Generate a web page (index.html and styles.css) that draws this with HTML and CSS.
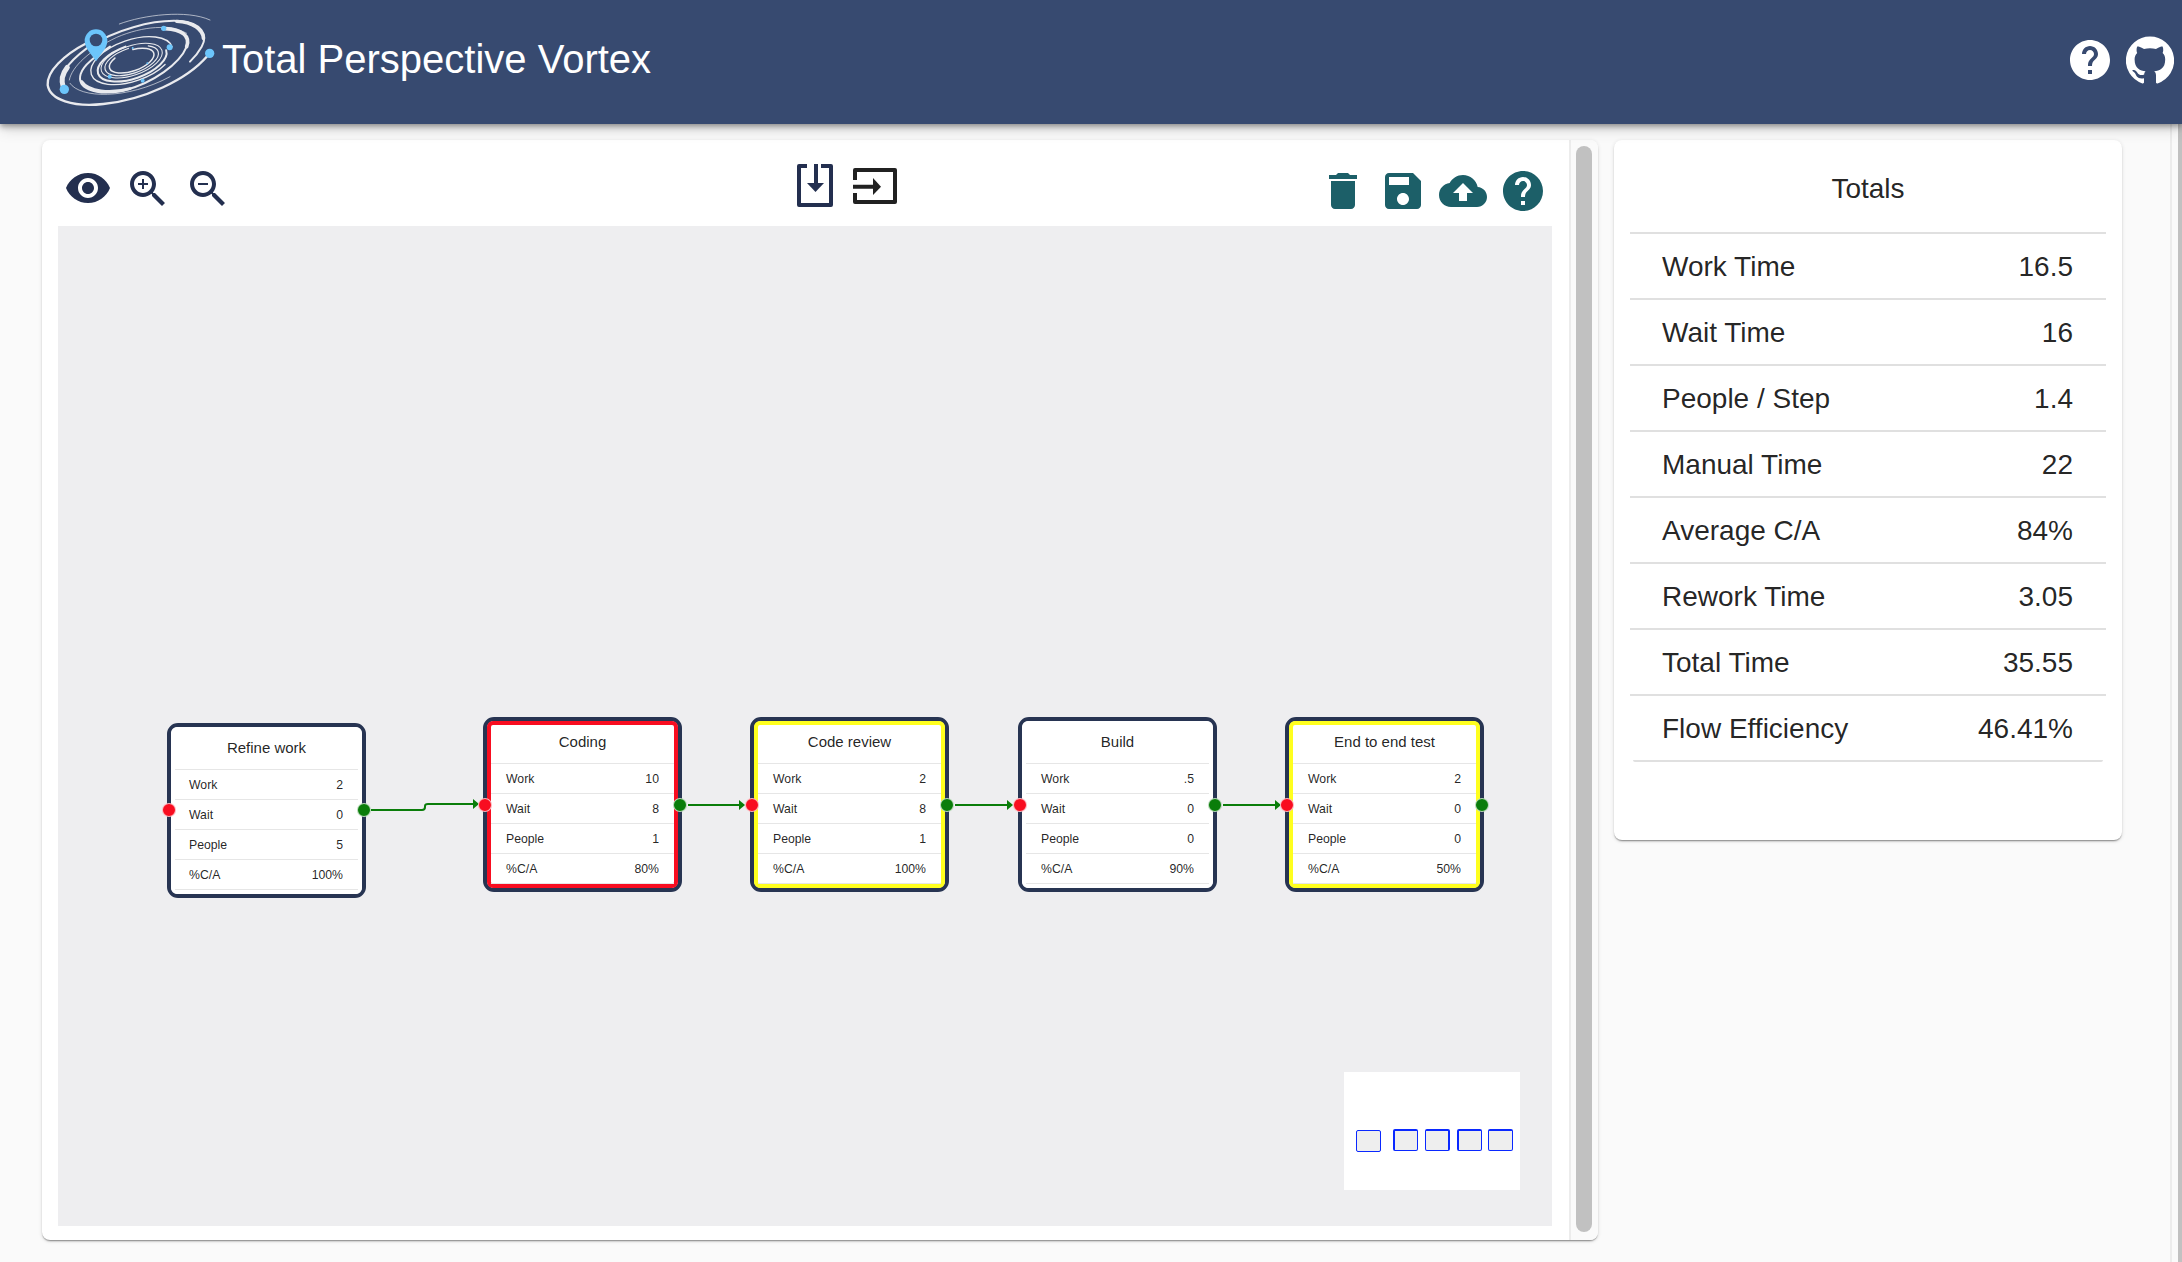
FILE: index.html
```html
<!DOCTYPE html>
<html lang="en">
<head>
<meta charset="utf-8">
<title>Total Perspective Vortex</title>
<link rel="stylesheet" href="styles.css">
</head>
<body>
<header class="app-bar">
  <svg class="logo" viewBox="0 0 576 372" aria-hidden="true">
    <g fill="none" stroke="#e9eaee" stroke-linecap="round">
      <path class="thin" d="M268 72C340 45 470 28 540 60"/>
      <path stroke-width="7" d="M532 168C470 240 340 300 220 312C130 322 60 300 53 255C50 215 100 165 172 128"/>
      <path stroke-width="6" d="M98 262C84 230 110 190 170 145C250 90 370 58 450 63C515 68 535 105 515 140C505 158 495 170 480 185"/>
      <path stroke-width="15" d="M100 262C92 240 96 222 112 202"/>
      <path stroke-width="10" d="M440 64C490 66 518 90 520 115"/>
      <path stroke-width="11" d="M406 86C455 88 482 108 470 140"/>
      <path stroke-width="6" d="M470 140C450 190 370 250 280 272C190 290 140 262 152 222C160 195 195 170 240 140"/>
      <path stroke-width="9" d="M155 245C175 275 240 282 300 266"/>
      <path class="thin" d="M118 240C125 200 180 150 260 112C340 78 420 72 470 100"/>
      <path class="thin" d="M120 250C150 295 290 300 420 230"/>
      <g transform="rotate(-19 305 182)">
        <ellipse stroke-width="4" cx="305" cy="182" rx="128" ry="62" stroke-dasharray="620 180" stroke-dashoffset="-60"/>
        <ellipse stroke-width="6" cx="305" cy="186" rx="108" ry="50" stroke-dasharray="380 150"/>
        <ellipse stroke-width="3" cx="305" cy="182" rx="96" ry="44"/>
        <ellipse stroke-width="3.5" cx="305" cy="182" rx="84" ry="38" stroke-dasharray="300 60"/>
        <ellipse stroke-width="4.5" cx="305" cy="182" rx="70" ry="31" stroke-dasharray="200 60"/>
      </g>
    </g>
    <g fill="#6cc5fb">
      <circle cx="103" cy="268" r="14"/>
      <circle cx="539" cy="160" r="14"/>
      <circle cx="401" cy="85" r="8"/>
      <circle cx="419" cy="142" r="9"/>
      <circle cx="239" cy="230" r="6"/>
      <circle cx="338" cy="242" r="6"/>
      <circle cx="308" cy="144" r="3"/>
      <circle cx="352" cy="190" r="3"/>
      <path d="M198 184C188 166 164 146 164 122a34 34 0 0 1 68 0C232 146 208 166 198 184z"/>
    </g>
    <circle cx="198" cy="120" r="19" fill="#374a70"/>
  </svg>
  <h1 class="app-title">Total Perspective Vortex</h1>
  <div class="app-actions">
    <svg class="icon-48 white" viewBox="0 0 24 24"><path d="M12 2C6.48 2 2 6.48 2 12s4.48 10 10 10 10-4.48 10-10S17.52 2 12 2zm1 17h-2v-2h2v2zm2.07-7.75l-.9.92C13.45 12.9 13 13.5 13 15h-2v-.5c0-1.1.45-2.1 1.17-2.83l1.24-1.26c.37-.36.59-.86.59-1.41 0-1.1-.9-2-2-2s-2 .9-2 2H8c0-2.21 1.79-4 4-4s4 1.79 4 4c0 .88-.36 1.68-.93 2.25z"/></svg>
    <svg class="icon-48 white" viewBox="0 0 24 24"><path d="M12 .3a12 12 0 0 0-3.8 23.4c.6.1.8-.3.8-.6v-2c-3.3.7-4-1.6-4-1.6-.6-1.4-1.4-1.8-1.4-1.8-1-.7.1-.7.1-.7 1.2 0 1.9 1.2 1.9 1.2 1 1.8 2.8 1.3 3.5 1 0-.8.4-1.3.7-1.6-2.7-.3-5.5-1.3-5.5-6 0-1.2.5-2.3 1.3-3.1-.2-.4-.6-1.6 0-3.2 0 0 1-.3 3.4 1.2a11.5 11.5 0 0 1 6 0c2.3-1.5 3.3-1.2 3.3-1.2.6 1.6.2 2.8 0 3.2.9.8 1.3 1.9 1.3 3.2 0 4.6-2.8 5.6-5.5 5.9.5.4.9 1 .9 2.2v3.3c0 .3.1.7.8.6A12 12 0 0 0 12 .3"/></svg>
  </div>
</header>

<main class="page">
  <section class="card editor">
    <div class="editor-body">
      <div class="toolbar">
        <div class="tool-group tool-left">
          <svg class="icon-48 navy eye" viewBox="0 0 24 24"><path d="M12 4.5C7 4.5 2.73 7.61 1 12c1.73 4.39 6 7.5 11 7.5s9.27-3.11 11-7.5c-1.73-4.39-6-7.5-11-7.5zM12 17c-2.76 0-5-2.24-5-5s2.24-5 5-5 5 2.24 5 5-2.24 5-5 5zm0-8c-1.66 0-3 1.34-3 3s1.34 3 3 3 3-1.34 3-3-1.34-3-3-3z"/></svg>
          <svg class="icon-48 navy" viewBox="0 0 24 24"><path d="M15.5 14h-.79l-.28-.27C15.41 12.59 16 11.11 16 9.5 16 5.91 13.09 3 9.5 3S3 5.91 3 9.5 5.91 16 9.5 16c1.61 0 3.09-.59 4.23-1.57l.27.28v.79l5 4.99L20.49 19l-4.99-5zm-6 0C7.01 14 5 11.99 5 9.5S7.01 5 9.5 5 14 7.01 14 9.5 11.99 14 9.5 14z"/><path d="M12 10h-2v2H9v-2H7V9h2V7h1v2h2v1z"/></svg>
          <svg class="icon-48 navy" viewBox="0 0 24 24"><path d="M15.5 14h-.79l-.28-.27C15.41 12.59 16 11.11 16 9.5 16 5.91 13.09 3 9.5 3S3 5.91 3 9.5 5.91 16 9.5 16c1.61 0 3.09-.59 4.23-1.57l.27.28v.79l5 4.99L20.49 19l-4.99-5zm-6 0C7.01 14 5 11.99 5 9.5S7.01 5 9.5 5 14 7.01 14 9.5 11.99 14 9.5 14zM7 9h5v1H7z"/></svg>
        </div>
        <div class="tool-group tool-center">
          <svg class="icon-import" viewBox="0 0 40 48"><path class="outline" d="M12 4H4v39h32V4h-10"/><path class="outline" d="M21 2v22"/><path class="solid" d="M12 21h17l-8.500 9z"/></svg>
          <svg class="icon-enter" viewBox="0 0 48 40"><path class="outline" d="M4 14V4h40v32H4V27"/><path class="outline" d="M2 20.700h21"/><path class="solid" d="M22 12l8 8.700-8 8.300z"/></svg>
        </div>
        <div class="tool-group tool-right">
          <svg class="icon-48 teal" viewBox="0 0 24 24"><path d="M6 19c0 1.100.9 2 2 2h8c1.100 0 2-.9 2-2V7H6v12zM19 4h-3.500l-1-1h-5l-1 1H5v2h14V4z"/></svg>
          <svg class="icon-48 teal" viewBox="0 0 24 24"><path d="M17 3H5c-1.110 0-2 .9-2 2v14c0 1.100.89 2 2 2h14c1.100 0 2-.9 2-2V7l-4-4zm-5 16c-1.660 0-3-1.340-3-3s1.340-3 3-3 3 1.340 3 3-1.340 3-3 3zm3-10H5V5h10v4z"/></svg>
          <svg class="icon-48 teal" viewBox="0 0 24 24"><path d="M19.350 10.040C18.670 6.590 15.640 4 12 4 9.110 4 6.600 5.640 5.350 8.040 2.340 8.360 0 10.910 0 14c0 3.310 2.690 6 6 6h13c2.760 0 5-2.240 5-5 0-2.640-2.050-4.780-4.650-4.960zM14 13v4h-4v-4H7l5-5 5 5h-3z"/></svg>
          <svg class="icon-48 teal" viewBox="0 0 24 24"><path d="M12 2C6.480 2 2 6.480 2 12s4.480 10 10 10 10-4.480 10-10S17.520 2 12 2zm1 17h-2v-2h2v2zm2.070-7.750l-.9.920C13.450 12.900 13 13.500 13 15h-2v-.5c0-1.100.45-2.100 1.170-2.830l1.240-1.260c.37-.36.59-.86.59-1.410 0-1.100-.9-2-2-2s-2 .9-2 2H8c0-2.210 1.790-4 4-4s4 1.790 4 4c0 .88-.36 1.680-.93 2.250z"/></svg>
        </div>
      </div>

      <div class="canvas">
        <svg class="edges" viewBox="0 0 1494 1000">
          <path class="edge" d="M313 584H364q3 0 3-3v-1q0-2 3-2H417"/>
          <path class="head" d="M415 573l6 5-6 5z"/>
          <path class="edge" d="M630 579H683"/>
          <path class="head" d="M681 574l6 5-6 5z"/>
          <path class="edge" d="M897 579H951"/>
          <path class="head" d="M949 574l6 5-6 5z"/>
          <path class="edge" d="M1165 579H1219"/>
          <path class="head" d="M1217 574l6 5-6 5z"/>
        </svg>

        <article class="node node-1">
          <div class="node-inner">
            <div class="node-title">Refine work</div>
            <div class="node-row"><span>Work</span><span>2</span></div>
            <div class="node-row"><span>Wait</span><span>0</span></div>
            <div class="node-row"><span>People</span><span>5</span></div>
            <div class="node-row"><span>%C/A</span><span>100%</span></div>
          </div>
          <span class="port port-in"></span><span class="port port-out"></span>
        </article>

        <article class="node node-2">
          <div class="node-inner alert">
            <div class="node-title">Coding</div>
            <div class="node-row"><span>Work</span><span>10</span></div>
            <div class="node-row"><span>Wait</span><span>8</span></div>
            <div class="node-row"><span>People</span><span>1</span></div>
            <div class="node-row"><span>%C/A</span><span>80%</span></div>
          </div>
          <span class="port port-in"></span><span class="port port-out"></span>
        </article>

        <article class="node node-3">
          <div class="node-inner warn">
            <div class="node-title">Code review</div>
            <div class="node-row"><span>Work</span><span>2</span></div>
            <div class="node-row"><span>Wait</span><span>8</span></div>
            <div class="node-row"><span>People</span><span>1</span></div>
            <div class="node-row"><span>%C/A</span><span>100%</span></div>
          </div>
          <span class="port port-in"></span><span class="port port-out"></span>
        </article>

        <article class="node node-4">
          <div class="node-inner">
            <div class="node-title">Build</div>
            <div class="node-row"><span>Work</span><span>.5</span></div>
            <div class="node-row"><span>Wait</span><span>0</span></div>
            <div class="node-row"><span>People</span><span>0</span></div>
            <div class="node-row"><span>%C/A</span><span>90%</span></div>
          </div>
          <span class="port port-in"></span><span class="port port-out"></span>
        </article>

        <article class="node node-5">
          <div class="node-inner warn">
            <div class="node-title">End to end test</div>
            <div class="node-row"><span>Work</span><span>2</span></div>
            <div class="node-row"><span>Wait</span><span>0</span></div>
            <div class="node-row"><span>People</span><span>0</span></div>
            <div class="node-row"><span>%C/A</span><span>50%</span></div>
          </div>
          <span class="port port-in"></span><span class="port port-out"></span>
        </article>

        <div class="minimap">
          <span class="mini mini-1"></span>
          <span class="mini mini-2"></span>
          <span class="mini mini-3"></span>
          <span class="mini mini-4"></span>
          <span class="mini mini-5"></span>
        </div>
      </div>
    </div>
    <div class="inner-track"><div class="inner-thumb"></div></div>
  </section>

  <aside class="card totals">
    <h2 class="totals-title">Totals</h2>
    <div class="totals-row"><span>Work Time</span><span>16.5</span></div>
    <div class="totals-row"><span>Wait Time</span><span>16</span></div>
    <div class="totals-row"><span>People / Step</span><span>1.4</span></div>
    <div class="totals-row"><span>Manual Time</span><span>22</span></div>
    <div class="totals-row"><span>Average C/A</span><span>84%</span></div>
    <div class="totals-row"><span>Rework Time</span><span>3.05</span></div>
    <div class="totals-row"><span>Total Time</span><span>35.55</span></div>
    <div class="totals-row last"><span>Flow Efficiency</span><span>46.41%</span></div>
  </aside>

  <div class="page-track"><div class="page-thumb"></div></div>
</main>
</body>
</html>
```

FILE: styles.css
```css
* { box-sizing: border-box; }

html, body {
  margin: 0;
  height: 100%;
  overflow: hidden;
}

body {
  display: flex;
  flex-direction: column;
  background: #fafafa;
  color: rgba(0, 0, 0, 0.87);
  font-family: "Liberation Sans", Arial, sans-serif;
}

/* App bar */
.app-bar {
  position: relative;
  z-index: 2;
  flex: none;
  display: flex;
  align-items: center;
  height: 124px;
  padding: 0 8px 0 30px;
  background: #374a70;
  box-shadow: 0 2px 4px -1px rgba(0,0,0,.2), 0 4px 5px rgba(0,0,0,.14), 0 1px 10px rgba(0,0,0,.12), 0 6px 14px rgba(0,0,0,.12);
}

.logo {
  flex: none;
  width: 192px;
  height: 124px;
}

.logo .thin { stroke-width: 2; }

.app-title {
  margin: 0 0 7px;
  color: #fff;
  font-size: 40px;
  font-weight: 400;
  line-height: 1;
}

.app-actions {
  display: flex;
  gap: 12px;
  margin-left: auto;
  margin-bottom: 4px;
}

.icon-48 {
  display: block;
  flex: none;
  width: 48px;
  height: 48px;
}

.white { fill: #fff; }
.navy { fill: #232f4f; }
.teal { fill: #1c5f68; }

/* Page */
.page {
  flex: 1;
  display: flex;
  align-items: flex-start;
  gap: 16px;
  min-height: 0;
  padding-left: 42px;
}

.card {
  background: #fff;
  border-radius: 8px;
  box-shadow: 0 2px 2px -1px rgba(0,0,0,.36), 0 1px 1px rgba(0,0,0,.1), 0 1px 4px rgba(0,0,0,.12);
}

.editor {
  display: flex;
  width: 1556px;
  height: 1100px;
  margin-top: 16px;
  overflow: hidden;
}

.editor-body {
  flex: none;
  width: 1527px;
  padding: 0 17px 0 16px;
}

/* Toolbar */
.toolbar {
  display: flex;
  align-items: flex-start;
  height: 86px;
  padding: 26px 5px 0 6px;
}

.tool-group {
  display: flex;
  flex: none;
}

.tool-left,
.tool-right { gap: 12px; }

.tool-left { margin-top: -1px; }

.eye { margin-top: -1px; }

.tool-center {
  gap: 16px;
  margin-top: -4px;
  margin-left: 563px;
}

.tool-right {
  margin-top: 1px;
  margin-left: auto;
}

.icon-import {
  display: block;
  width: 40px;
  height: 48px;
}

.icon-enter {
  display: block;
  width: 48px;
  height: 40px;
  margin-top: 4px;
}

.icon-import .outline { stroke: #232f4f; }
.icon-enter .outline { stroke: #212121; }

.outline {
  fill: none;
  stroke-width: 4;
  stroke-linejoin: round;
}

.icon-import .solid { fill: #232f4f; }
.icon-enter .solid { fill: #212121; }

/* Canvas */
.canvas {
  position: relative;
  width: 1494px;
  height: 1000px;
  background: #eeeef0;
  overflow: hidden;
}

.edges {
  position: absolute;
  inset: 0;
  width: 100%;
  height: 100%;
}

.edge {
  fill: none;
  stroke: #0a7d0a;
  stroke-width: 2;
}

.head { fill: #0a7d0a; }

.node {
  position: absolute;
  width: 199px;
  height: 175px;
  border: 4px solid #273452;
  border-radius: 11px;
  background: #fff;
}

.node-1 { left: 109px; top: 497px; }
.node-2 { left: 425px; top: 491px; }
.node-3 { left: 692px; top: 491px; }
.node-4 { left: 960px; top: 491px; }
.node-5 { left: 1227px; top: 491px; }

.node-inner {
  height: 100%;
  border: 4px solid #fff;
  border-radius: 6px;
}

.alert { border-color: #f80d20; }
.warn { border-color: #ffff1e; }

.node-title {
  height: 39px;
  border-bottom: 1px solid #e6e6e6;
  font-size: 15px;
  line-height: 34px;
  text-align: center;
}

.node-row {
  display: flex;
  justify-content: space-between;
  align-items: center;
  height: 30px;
  padding: 0 15px 0 14px;
  border-bottom: 1px solid #e6e6e6;
  font-size: 12.25px;
}

.node-2 .node-row,
.node-3 .node-row,
.node-4 .node-row,
.node-5 .node-row { padding: 1px 15px 0 15px; }

.port {
  position: absolute;
  top: 76px;
  width: 14px;
  height: 14px;
  border: 1px solid rgba(255,255,255,.7);
  border-radius: 50%;
}

.node-2 .port,
.node-3 .port,
.node-4 .port,
.node-5 .port { top: 77px; }

.port-in { left: -9px; background: #f80d20; }
.port-out { right: -9px; background: #0a7d0a; }

/* Minimap */
.minimap {
  position: absolute;
  left: 1286px;
  top: 846px;
  width: 176px;
  height: 118px;
  background: #fff;
}

.mini {
  position: absolute;
  top: 57px;
  width: 25px;
  height: 22px;
  border: 1px solid #0a28ff;
  border-top-width: 2px;
  border-radius: 2px;
  background: #eee;
}

.mini-1 { left: 12px; top: 58px; border-top-width: 1px; }
.mini-2 { left: 49px; border-left-width: 2px; }
.mini-3 { left: 81px; border-right-width: 2px; }
.mini-4 { left: 113px; border-left-width: 2px; }
.mini-5 { left: 144px; }

/* Inner scrollbar */
.inner-track {
  flex: 1;
  padding: 6px 5px 8px;
  border-left: 2px solid #ececec;
  background: #fafafa;
}

.inner-thumb {
  width: 16px;
  height: 100%;
  border-radius: 8px;
  background: #c1c1c1;
}

/* Totals */
.totals {
  width: 508px;
  height: 700px;
  margin-top: 16px;
  padding: 0 16px;
}

.totals-title {
  height: 94px;
  margin: 0;
  border-bottom: 2px solid #e0e0e0;
  font-size: 28px;
  font-weight: 400;
  line-height: 98px;
  text-align: center;
}

.totals-row {
  display: flex;
  justify-content: space-between;
  align-items: center;
  height: 66px;
  padding: 2px 33px 0 32px;
  border-bottom: 2px solid #e0e0e0;
  font-size: 28px;
}

.totals-row.last {
  margin: 0 3px;
  padding: 2px 30px 0 29px;
  border-radius: 0 0 2px 2px;
}

/* Page scrollbar */
.page-track {
  align-self: stretch;
  display: flex;
  justify-content: flex-end;
  width: 12px;
  margin-left: auto;
  border-left: 2px solid #ececec;
}

.page-thumb {
  width: 4px;
  height: 100%;
  background: #c1c1c1;
}
```
